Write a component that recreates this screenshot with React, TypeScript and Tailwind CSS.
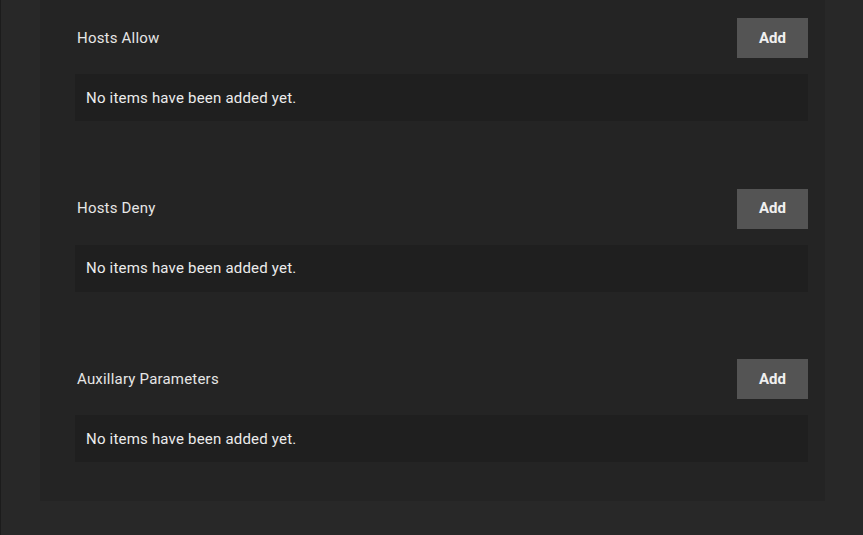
import React from "react";

const sections = ["Hosts Allow", "Hosts Deny", "Auxillary Parameters"];

export default function App() {
  return (
    <div
      className="w-[863px] h-[535px] overflow-hidden bg-[#282828] border-l border-[#1c1c1c] flex flex-col"
      style={{ fontFamily: "Roboto, 'Noto Sans', sans-serif" }}
    >
      <div className="ml-[39px] w-[785px] bg-[#242424] pl-[35px] pr-[17px] pt-[18px] pb-[39px] flex flex-col gap-[67.5px]">
        {sections.map((s) => (
          <div key={s} className="flex flex-col gap-[16px]">
            <div className="flex items-center justify-between">
              <span className="pl-[2px] text-[15px] tracking-[0.2px] text-[#e6e6e6]">{s}</span>
              <button className="w-[71px] h-[40px] bg-[#545454] text-[#f0f0f0] font-bold text-[15px] flex items-center justify-center">
                Add
              </button>
            </div>
            <div className="h-[47px] bg-[#1f1f1f] flex items-center px-[11px] pt-[1px] text-[15px] tracking-[0.2px] text-[#ececec]">
              No items have been added yet.
            </div>
          </div>
        ))}
      </div>
    </div>
  );
}
